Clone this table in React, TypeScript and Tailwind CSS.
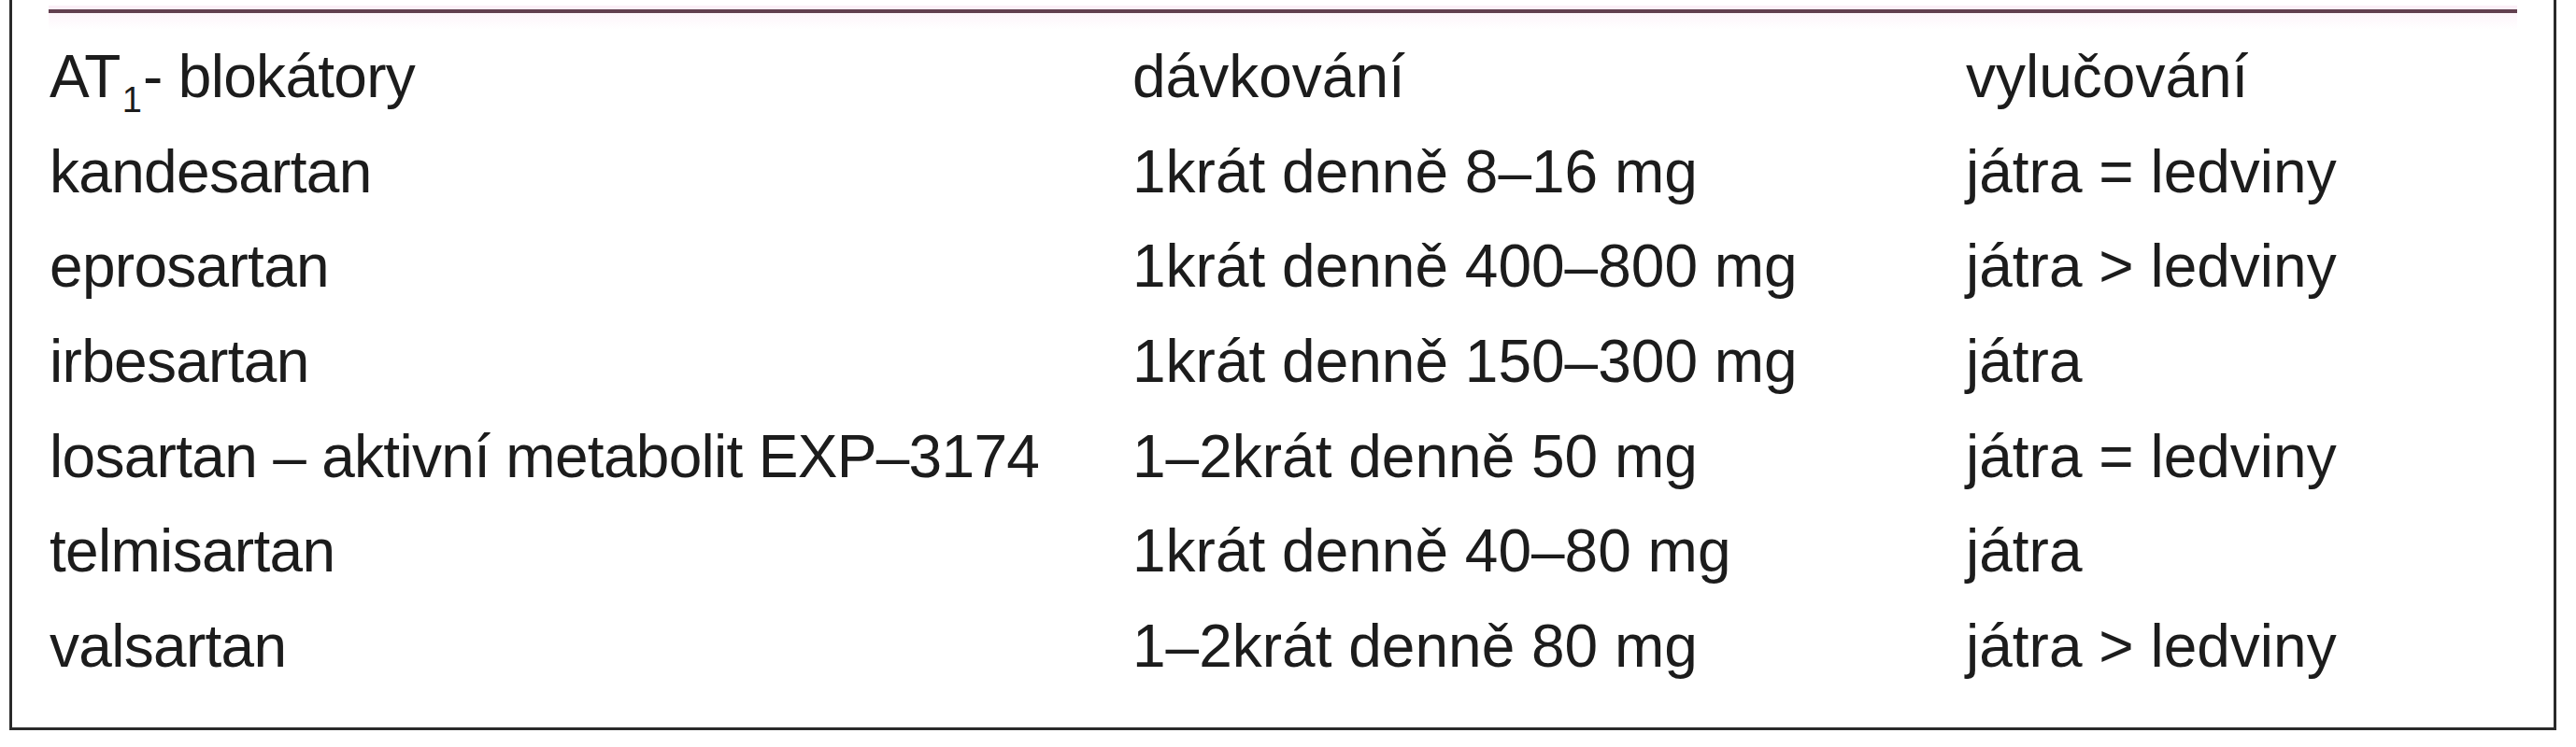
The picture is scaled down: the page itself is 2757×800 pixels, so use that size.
import * as React from "react";

type Row = { name: React.ReactNode; dose: string; excretion: string };

const rows: Row[] = [
  {
    name: (
      <>
        AT<span className="relative top-[16px] mx-[2px] text-[38px] leading-none">1</span>- blokátory
      </>
    ),
    dose: "dávkování",
    excretion: "vylučování",
  },
  { name: "kandesartan", dose: "1krát denně 8–16 mg", excretion: "játra = ledviny" },
  { name: "eprosartan", dose: "1krát denně 400–800 mg", excretion: "játra > ledviny" },
  { name: "irbesartan", dose: "1krát denně 150–300 mg", excretion: "játra" },
  {
    name: "losartan – aktivní metabolit EXP–3174",
    dose: "1–2krát denně 50 mg",
    excretion: "játra = ledviny",
  },
  { name: "telmisartan", dose: "1krát denně 40–80 mg", excretion: "játra" },
  { name: "valsartan", dose: "1–2krát denně 80 mg", excretion: "játra > ledviny" },
];

const App: React.FC = () => {
  return (
    <div className="h-[800px] w-[2757px] bg-white font-['Liberation_Sans',Arial,sans-serif] text-[#1c1c1c]">
      <div className="ml-[10px] h-[782px] w-[2726px] border-x-[3px] border-b-[3px] border-[#2a2a2a]">
        <div className="px-[39px] pt-[6px]">
          <div className="h-[4px] bg-[#fbeff7]" />
          <div className="h-[4px] bg-[#62404f]" />
          <div className="h-[18px] bg-gradient-to-b from-[#fdf5fa] to-white" />
        </div>
        <div className="pl-[40px]">
          {rows.map((row, i) => (
            <div
              key={i}
              className="grid h-[101.7px] grid-cols-[1159px_892px_1fr] items-center text-[64px] leading-[101.7px]"
            >
              <div className="whitespace-nowrap tracking-[-0.7px]">{row.name}</div>
              <div className="whitespace-nowrap">{row.dose}</div>
              <div className="whitespace-nowrap">{row.excretion}</div>
            </div>
          ))}
        </div>
      </div>
    </div>
  );
};

export default App;
